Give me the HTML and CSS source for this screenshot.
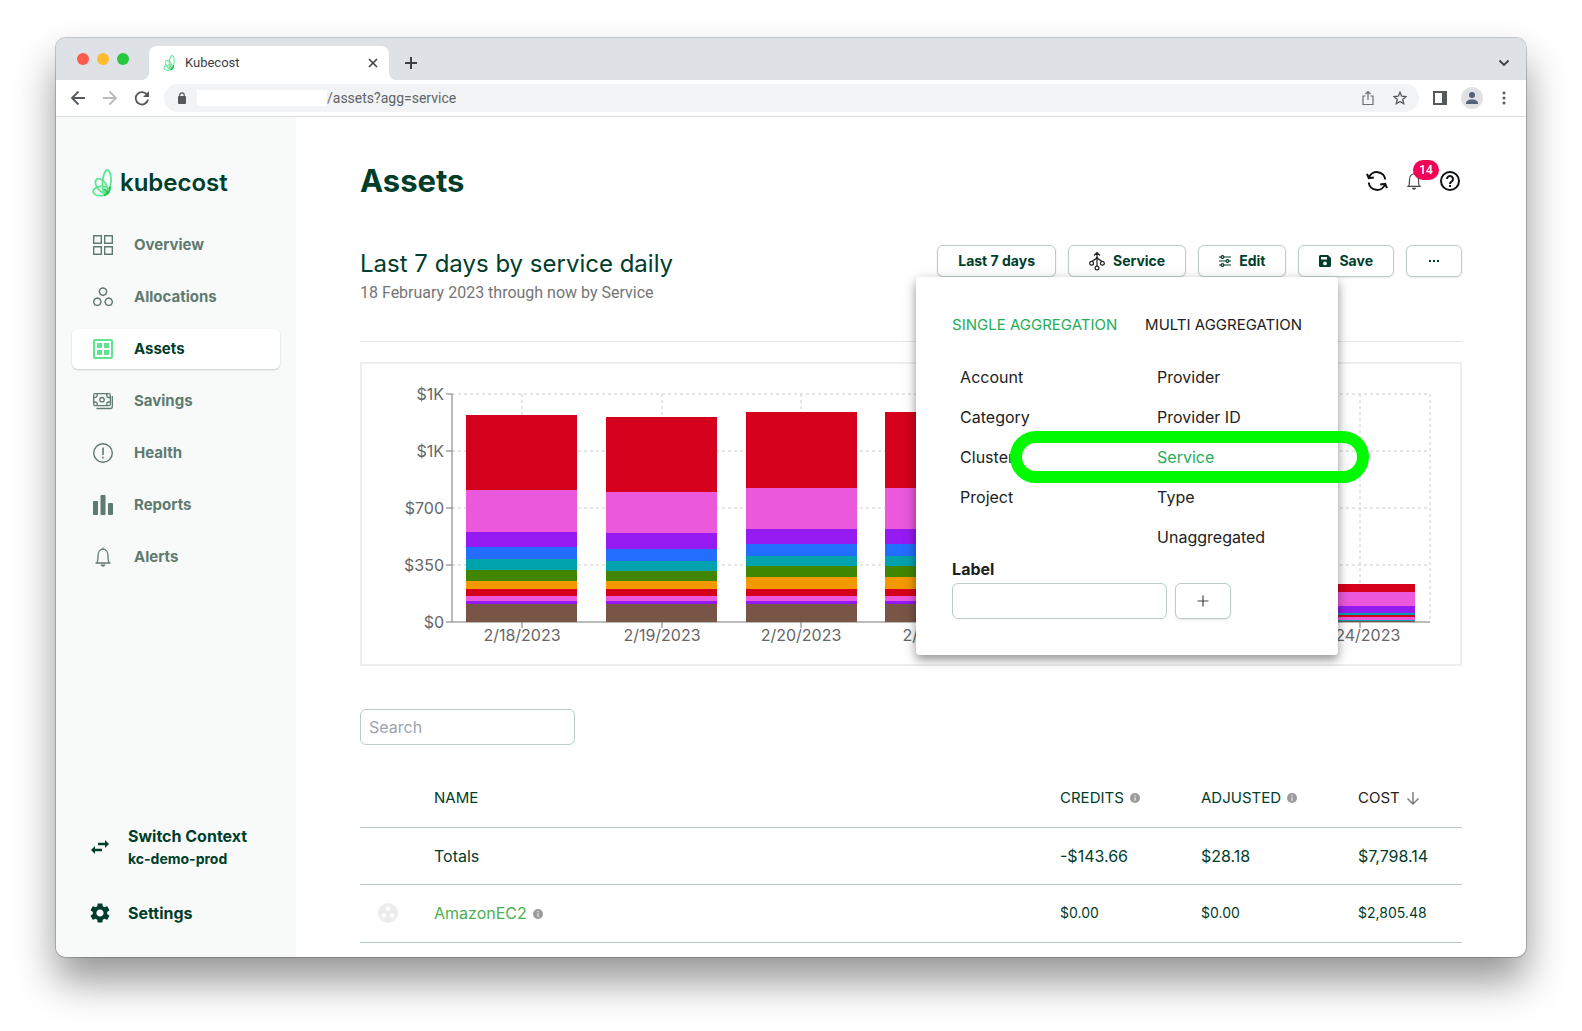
FILE: index.html
```html
<!DOCTYPE html>
<html lang="en">
<head>
<meta charset="utf-8">
<title>Kubecost</title>
<meta name="viewport" content="width=device-width, initial-scale=1">
<link rel="stylesheet" href="styles.css">
</head>
<body>
<svg class="defs" aria-hidden="true">
  <symbol id="mark" viewBox="0 0 20 28">
    <g fill="none" stroke-width="1.800">
      <ellipse cx="14.700" cy="13" rx="4.200" ry="12" stroke="#5fe590" transform="rotate(4 14.700 13)"/>
      <ellipse cx="9.500" cy="16.800" rx="4.600" ry="8.200" stroke="#5fe590" transform="rotate(-36 9.500 16.800)"/>
      <ellipse cx="9.200" cy="22" rx="8.200" ry="4.600" stroke="#5fe590" transform="rotate(-8 9.200 22)"/>
      <path d="M18 17.500c0 5-2 8-6 8.800" stroke="#1fc94f"/>
      <path d="M12 20c2 1.500 3.500 3 4 5" stroke="#1fc94f"/>
    </g>
  </symbol>
  <symbol id="bell" viewBox="0 0 20 20">
    <path d="M2.500 16h15M4 16c1-2 1-3.500 1-7 0-4 2-6.800 5-6.800S15 5 15 9c0 3.500 0 5 1 7M10 .5v2" fill="none" stroke="currentColor" stroke-width="1.300"/>
    <path d="M7.500 17.600h5c-.4 1.500-1.300 2.100-2.500 2.100s-2.100-.6-2.500-2.100z" fill="currentColor"/>
  </symbol>
  <symbol id="info" viewBox="0 0 10 10">
    <circle cx="5" cy="5" r="5" fill="#9b9b9b"/>
    <path d="M5 2v1.200M5 4.200V7.800" stroke="#fff" stroke-width="1"/>
  </symbol>
</svg>

<div class="window">
  <div class="tabstrip">
    <div class="lights"><span class="light red"></span><span class="light amber"></span><span class="light green"></span></div>
    <div class="tab">
      <svg class="favicon" aria-hidden="true"><use href="#mark"/></svg>
      <span class="tab-title">Kubecost</span>
      <button class="plain" aria-label="Close tab"><svg width="10" height="10" viewBox="0 0 10 10"><path d="M1 1l8 8M9 1L1 9" stroke="#3c4043" stroke-width="1.600"/></svg></button>
    </div>
    <button class="plain new-tab" aria-label="New tab"><svg width="12" height="12" viewBox="0 0 12 12"><path d="M6 0v12M0 6h12" stroke="#3c4043" stroke-width="2"/></svg></button>
    <button class="plain tab-search" aria-label="Search tabs"><svg width="12" height="8" viewBox="0 0 12 8"><path d="M1.500 1.500L6 6l4.500-4.500" fill="none" stroke="#3c4043" stroke-width="1.800"/></svg></button>
  </div>

  <div class="toolbar">
    <div class="history">
      <button class="plain" aria-label="Back"><svg width="16" height="16" viewBox="0 0 16 16"><path d="M15 8H2M8.500 1.500L2 8l6.500 6.500" fill="none" stroke="#55585c" stroke-width="1.800"/></svg></button>
      <button class="plain" aria-label="Forward"><svg width="16" height="16" viewBox="0 0 16 16"><path d="M1 8h13M7.500 1.500L14 8l-6.500 6.500" fill="none" stroke="#b9bbbe" stroke-width="1.800"/></svg></button>
      <button class="plain" aria-label="Reload"><svg width="16" height="16" viewBox="0 0 16 16"><path d="M13.200 5A6.200 6.200 0 1 0 14 9.500" fill="none" stroke="#55585c" stroke-width="1.800"/><path d="M15 1v6H9z" fill="#55585c"/></svg></button>
    </div>
    <div class="address">
      <svg width="10" height="12" viewBox="0 0 10 12" aria-hidden="true"><rect x="1" y="4" width="8" height="8" rx="1" fill="#55585c"/><path d="M2.800 5V3a2.200 2.200 0 0 1 4.400 0v2" fill="none" stroke="#55585c" stroke-width="1.200"/></svg>
      <span class="host"></span>
      <span class="path">/assets?agg=service</span>
      <button class="plain share" aria-label="Share"><svg width="12" height="16" viewBox="0 0 12 16"><path d="M3.500 6H1v8.500h10V6H8.500M6 10V1.500M3.500 4L6 1.500 8.500 4" fill="none" stroke="#6b6e72" stroke-width="1.200"/></svg></button>
      <button class="plain" aria-label="Bookmark"><svg width="14" height="14" viewBox="0 0 14 14"><path d="M7 1.200l1.700 4 4.300.4-3.300 2.800 1 4.300L7 10.400l-3.700 2.300 1-4.300L1 5.600l4.300-.4z" fill="none" stroke="#55585c" stroke-width="1.300"/></svg></button>
    </div>
    <button class="plain" aria-label="Side panel"><svg width="14" height="14" viewBox="0 0 14 14"><rect x="1" y="1" width="12" height="12" fill="none" stroke="#55585c" stroke-width="2"/><path d="M9 1h4v12H9z" fill="#55585c"/></svg></button>
    <button class="plain" aria-label="Profile"><svg width="22" height="22" viewBox="0 0 22 22"><circle cx="11" cy="11" r="11" fill="#dfe1e5"/><circle cx="11" cy="8" r="3" fill="#55607a"/><path d="M5 16.500c0-3 3-4 6-4s6 1 6 4v.5H5z" fill="#55607a"/></svg></button>
    <button class="plain" aria-label="Menu"><svg width="14" height="16" viewBox="0 0 14 16"><g fill="#55585c"><circle cx="7" cy="3" r="1.500"/><circle cx="7" cy="8" r="1.500"/><circle cx="7" cy="13" r="1.500"/></g></svg></button>
  </div>

  <div class="app">
    <aside class="sidebar">
      <a class="brand" href="#"><svg class="mark" aria-hidden="true"><use href="#mark"/></svg>kubecost</a>
      <nav class="nav">
        <a href="#"><svg class="icon" viewBox="0 0 20 20"><path d="M.7.7h7.600v7.600H.7zM11.700.7h7.600v7.600h-7.600zM.7 11.700h7.600v7.600H.7zM11.700 11.700h7.600v7.600h-7.600z" fill="none" stroke="currentColor" stroke-width="1.400"/></svg>Overview</a>
        <a href="#"><svg class="icon" viewBox="0 0 20 20"><g fill="none" stroke="currentColor" stroke-width="1.400"><path d="M10 .8l2.600 1 1.200 2.800-1.200 2.800-2.600 1-2.600-1-1.200-2.800 1.200-2.800z"/><path d="M4.300 11l2.600 1 1.200 2.800-1.200 2.800-2.600 1-2.600-1-1.200-2.800L1.700 12z"/><path d="M15.700 11l2.600 1 1.200 2.800-1.200 2.800-2.600 1-2.600-1-1.200-2.800 1.200-2.800z"/></g></svg>Allocations</a>
        <a href="#" class="active" aria-current="page"><svg class="icon" viewBox="0 0 20 20"><rect x="1" y="1" width="18" height="18" rx="1" fill="none" stroke="currentColor" stroke-width="2"/><path d="M4 4h5v5H4zM11 4h5v5h-5zM4 11h5v5H4zM11 11h5v5h-5z" fill="currentColor"/></svg>Assets</a>
        <a href="#"><svg class="icon" viewBox="0 0 20 20"><g fill="none" stroke="currentColor" stroke-width="1.300"><rect x=".7" y="2.700" width="16.600" height="12" rx="1.500"/><path d="M19.300 5v10.500a2 2 0 0 1-2 2H3.500"/><circle cx="9" cy="8.700" r="2.200"/><path d="M.7 6.500h1.500a2 2 0 0 0 2-2V2.700M17.300 6.500h-1.500a2 2 0 0 1-2-2V2.700M.7 11h1.500a2 2 0 0 1 2 2v1.700M17.300 11h-1.500a2 2 0 0 0-2 2v1.700"/></g></svg>Savings</a>
        <a href="#"><svg class="icon" viewBox="0 0 20 20"><circle cx="10" cy="10" r="9.300" fill="none" stroke="currentColor" stroke-width="1.400"/><path d="M10 4.500v7.500M10 13.800v1.700" stroke="currentColor" stroke-width="1.600"/></svg>Health</a>
        <a href="#"><svg class="icon" viewBox="0 0 20 20"><g fill="currentColor"><rect y="6" width="5" height="14" rx="1"/><rect x="7.500" width="5" height="20" rx="1"/><rect x="15" y="8" width="5" height="12" rx="1"/></g></svg>Reports</a>
        <a href="#"><svg class="icon"><use href="#bell"/></svg>Alerts</a>
      </nav>
      <div class="sidebar-foot">
        <a href="#"><svg width="22" height="22" viewBox="0 0 22 22"><path d="M9 6.800h7V4l4 4-4 4V9.200H9zM13 12.800H6V10l-4 4 4 4v-2.800h7z" fill="currentColor"/></svg><span>Switch Context<small>kc-demo-prod</small></span></a>
        <a href="#"><svg width="22" height="22" viewBox="1 1 22 22"><path fill="currentColor" d="M19.140 12.940c.04-.3.060-.61.060-.94 0-.32-.02-.64-.07-.94l2.030-1.580c.18-.14.230-.41.120-.61l-1.920-3.320c-.12-.22-.37-.29-.59-.22l-2.390.960c-.5-.38-1.030-.7-1.620-.94l-.36-2.540c-.04-.24-.24-.41-.48-.41h-3.840c-.24 0-.43.170-.47.410l-.36 2.540c-.59.240-1.130.570-1.620.940l-2.390-.96c-.22-.08-.47 0-.59.220L2.740 8.870c-.12.210-.08.470.120.610l2.030 1.580c-.05.300-.09.630-.09.940s.02.640.070.940l-2.030 1.580c-.18.140-.23.410-.12.610l1.920 3.320c.12.220.370.290.590.220l2.390-.96c.5.380 1.030.700 1.620.940l.36 2.540c.05.240.240.410.480.410h3.840c.24 0 .44-.17.470-.41l.36-2.540c.59-.24 1.130-.56 1.620-.94l2.390.960c.22.080.470 0 .59-.22l1.920-3.320c.12-.22.070-.47-.12-.61l-2.010-1.580zM12 15.600c-1.980 0-3.600-1.620-3.600-3.600s1.620-3.600 3.600-3.600 3.600 1.620 3.600 3.600-1.620 3.600-3.600 3.600z"/></svg><span>Settings</span></a>
      </div>
    </aside>

    <main class="main">
      <header class="page-head">
        <h1>Assets</h1>
        <div class="head-icons">
          <button class="plain" aria-label="Refresh"><svg width="22" height="22" viewBox="0 0 22 22"><g fill="none" stroke="#111" stroke-width="2"><path d="M3 7.800A8.400 8.400 0 0 1 19.300 9.500M19 14.200A8.400 8.400 0 0 1 2.700 12.500"/><path d="M1 3.800l1.800 4.400 5-.8M21 18.200l-1.800-4.400-5 .8"/></g></svg></button>
          <button class="plain bell" aria-label="Notifications"><svg width="18" height="18"><use href="#bell"/></svg><span class="badge">14</span></button>
          <button class="plain" aria-label="Help"><svg width="20" height="20" viewBox="0 0 20 20"><circle cx="10" cy="10" r="9" fill="none" stroke="#111" stroke-width="2"/><path d="M7 8a3 3 0 1 1 4.500 2.600C10.500 11.200 10 11.700 10 13" fill="none" stroke="#111" stroke-width="2"/><path d="M9 14h2v2H9z" fill="#111"/></svg></button>
        </div>
      </header>

      <section class="report-head">
        <div class="report-title">
          <h2>Last 7 days by service daily</h2>
          <p>18 February 2023 through now by Service</p>
        </div>
        <div class="actions">
          <button class="btn">Last 7 days</button>
          <div class="menu-anchor">
            <button class="btn" aria-expanded="true"><svg width="16" height="20" viewBox="0 0 16 20"><g fill="none" stroke="#222" stroke-width="1.200"><path d="M8 15V1.500M5 4.500l3-3 3 3M3.300 10.500C4 8.500 8 9 8 5.500M12.700 10.500C12 8.500 8 9 8 5.500"/><circle cx="2.600" cy="12.300" r="1.900"/><circle cx="13.400" cy="12.300" r="1.900"/><circle cx="8" cy="17" r="1.900"/></g></svg>Service</button>
            <div class="popover">
              <div class="agg-tabs">
                <button class="plain selected">SINGLE AGGREGATION</button>
                <button class="plain">MULTI AGGREGATION</button>
              </div>
              <div class="agg-options">
                <div class="agg-column">
                  <button class="plain">Account</button>
                  <button class="plain">Category</button>
                  <button class="plain">Cluster</button>
                  <button class="plain">Project</button>
                </div>
                <div class="agg-column">
                  <button class="plain">Provider</button>
                  <button class="plain">Provider ID</button>
                  <button class="plain selected">Service</button>
                  <button class="plain">Type</button>
                  <button class="plain">Unaggregated</button>
                </div>
              </div>
              <label class="label-title" for="label-input">Label</label>
              <div class="label-row">
                <input class="field" id="label-input" type="text">
                <button class="btn add" aria-label="Add label"><svg width="12" height="12" viewBox="0 0 12 12"><path d="M6 .5v11M.5 6h11" stroke="#444" stroke-width="1.200"/></svg></button>
              </div>
              <span class="ring"></span>
            </div>
          </div>
          <button class="btn"><svg class="small" viewBox="0 0 12 12"><g fill="none" stroke="currentColor" stroke-width="1.200"><path d="M0 2h2M5 2h7M0 6h7M10 6h2M0 10h2M5 10h7"/><circle cx="3.500" cy="2" r="1.300"/><circle cx="8.500" cy="6" r="1.300"/><circle cx="3.500" cy="10" r="1.300"/></g></svg>Edit</button>
          <button class="btn"><svg class="small" viewBox="0 0 12 12"><path fill="currentColor" fill-rule="evenodd" d="M1.500 0H9l3 3v7.500A1.500 1.500 0 0 1 10.500 12h-9A1.500 1.500 0 0 1 0 10.500v-9A1.500 1.500 0 0 1 1.500 0zM2 2v2.500h6V2zM6 6.500a1.900 1.900 0 1 0 0 3.800 1.900 1.900 0 0 0 0-3.800z"/></svg>Save</button>
          <button class="btn more" aria-label="More"><svg width="12" height="4" viewBox="0 0 12 4"><path d="M1 1h2v2H1zM5 1h2v2H5zM9 1h2v2H9z" fill="currentColor"/></svg></button>
        </div>
      </section>

      <figure class="chart">
        <svg viewBox="0 0 1098 300" role="img" aria-label="Daily cost by service">
          <g class="grid">
            <path d="M90 30H1068M90 87H1068M90 144H1068M90 201H1068"/>
            <path d="M160 30V258M300 30V258M439 30V258M579 30V258M719 30V258M858 30V258M998 30V258M1068 30V258"/>
          </g>
          <path class="axis" d="M90 30V258H1068"/>
          <path class="ticks" d="M84 30h6M84 87h6M84 144h6M84 201h6M84 258h6M160 258v6M300 258v6M439 258v6M579 258v6M719 258v6M858 258v6M998 258v6"/>
          <g>
            <path class="c-red" d="M104 51h111v75H104zM104 225h111v7H104z"/>
            <path class="c-pink" d="M104 126h111v42H104zM104 232h111v5H104z"/>
            <path class="c-purple" d="M104 168h111v15H104zM104 237h111v3H104z"/>
            <path class="c-blue" d="M104 183h111v12H104z"/>
            <path class="c-teal" d="M104 195h111v11H104z"/>
            <path class="c-green" d="M104 206h111v11H104z"/>
            <path class="c-orange" d="M104 217h111v8H104z"/>
            <path class="c-brown" d="M104 240h111v18H104z"/>
          </g>
          <g>
            <path class="c-red" d="M244 53h111v75H244zM244 225h111v7H244z"/>
            <path class="c-pink" d="M244 128h111v41H244zM244 232h111v5H244z"/>
            <path class="c-purple" d="M244 169h111v16H244zM244 237h111v3H244z"/>
            <path class="c-blue" d="M244 185h111v12H244z"/>
            <path class="c-teal" d="M244 197h111v10H244z"/>
            <path class="c-green" d="M244 207h111v10H244z"/>
            <path class="c-orange" d="M244 217h111v8H244z"/>
            <path class="c-brown" d="M244 240h111v18H244z"/>
          </g>
          <g id="day-3">
            <path class="c-red" d="M384 48h111v76H384zM384 225h111v7H384z"/>
            <path class="c-pink" d="M384 124h111v41H384zM384 232h111v5H384z"/>
            <path class="c-purple" d="M384 165h111v15H384zM384 237h111v3H384z"/>
            <path class="c-blue" d="M384 180h111v12H384z"/>
            <path class="c-teal" d="M384 192h111v10H384z"/>
            <path class="c-green" d="M384 202h111v11H384z"/>
            <path class="c-orange" d="M384 213h111v12H384z"/>
            <path class="c-brown" d="M384 240h111v18H384z"/>
          </g>
          <use href="#day-3" x="139"/>
          <use href="#day-3" x="279"/>
          <use href="#day-3" x="419"/>
          <g>
            <path class="c-red" d="M942 220h111v8H942zM942 251h111v2H942z"/>
            <path class="c-pink" d="M942 228h111v14H942zM942 253h111v3H942z"/>
            <path class="c-purple" d="M942 242h111v7H942z"/>
            <path class="c-teal" d="M942 249h111v2H942zM942 256h111v1H942z"/>
            <path class="c-brown" d="M942 257h111v1H942z"/>
          </g>
          <g class="y-labels">
            <text x="82" y="36">$1K</text><text x="82" y="93">$1K</text><text x="82" y="150">$700</text><text x="82" y="207">$350</text><text x="82" y="264">$0</text>
          </g>
          <g class="x-labels">
            <text x="160" y="277">2/18/2023</text><text x="300" y="277">2/19/2023</text><text x="439" y="277">2/20/2023</text><text x="579" y="277">2/21/2023</text><text x="719" y="277">2/22/2023</text><text x="858" y="277">2/23/2023</text><text x="998" y="277">2/24/2023</text>
          </g>
        </svg>
      </figure>

      <input class="field search" type="search" placeholder="Search" aria-label="Search">

      <table class="assets">
        <colgroup><col class="col-icon"><col><col class="col-credits"><col class="col-adjusted"><col class="col-cost"></colgroup>
        <thead>
          <tr><th></th><th>NAME</th><th>CREDITS<svg class="info"><use href="#info"/></svg></th><th>ADJUSTED<svg class="info"><use href="#info"/></svg></th><th class="sorted">COST<svg class="sort" viewBox="0 0 14 14"><path d="M7 1v12M1.500 7.500L7 13l5.500-5.500" fill="none" stroke="#777" stroke-width="1.400"/></svg></th></tr>
        </thead>
        <tbody>
          <tr><td></td><td>Totals</td><td>-$143.66</td><td>$28.18</td><td>$7,798.14</td></tr>
          <tr class="item"><td><svg class="group" viewBox="0 0 20 20"><circle cx="10" cy="10" r="10" fill="#ececec"/><g fill="#fff"><circle cx="10" cy="5.800" r="2.300"/><circle cx="5.800" cy="12.500" r="2.300"/><circle cx="14.200" cy="12.500" r="2.300"/></g></svg></td><td class="name"><a href="#">AmazonEC2</a><svg class="info"><use href="#info"/></svg></td><td>$0.00</td><td>$0.00</td><td>$2,805.48</td></tr>
        </tbody>
      </table>
    </main>
  </div>
</div>
</body>
</html>
```
FILE: styles.css
```css
* { box-sizing: border-box; }

body {
  margin: 0;
  min-height: 100vh;
  padding: 38px 56px 74px;
  display: flex;
  background: #fff;
  font: 16px/24px Inter, "Liberation Sans", sans-serif;
  color: #003d2b;
}

a { color: inherit; text-decoration: none; }
svg { flex: none; }
button, input { font: inherit; color: inherit; }
h1, h2, p, figure { margin: 0; }

.defs { position: absolute; width: 0; height: 0; }

.plain {
  display: flex;
  align-items: center;
  justify-content: center;
  padding: 0;
  border: 0;
  background: none;
}

/* Browser window */
.window {
  flex: 1;
  min-width: 0;
  display: flex;
  flex-direction: column;
  border-radius: 10px;
  overflow: hidden;
  background: #fff;
  box-shadow: 0 0 0 1px rgba(0, 0, 0, .2), 0 24px 40px rgba(0, 0, 0, .42);
}

.tabstrip {
  display: flex;
  align-items: flex-end;
  height: 42px;
  padding-right: 16px;
  background: #dee1e6;
}

.lights { display: flex; gap: 8px; align-self: center; width: 93px; padding-left: 21px; }
.light { width: 12px; height: 12px; border-radius: 50%; }
.red { background: #ff5a52; }
.amber { background: #febb2d; }
.green { background: #27c83f; }

.tab {
  position: relative;
  display: flex;
  align-items: center;
  width: 240px;
  height: 34px;
  padding: 0 11px 0 13px;
  border-radius: 8px 8px 0 0;
  background: #fff;
}
.tab::before,
.tab::after {
  content: "";
  position: absolute;
  bottom: 0;
  width: 8px;
  height: 8px;
}
.tab::before { right: 100%; background: radial-gradient(circle at 0 0, transparent 8px, #fff 8px); }
.tab::after { left: 100%; background: radial-gradient(circle at 100% 0, transparent 8px, #fff 8px); }
.favicon { width: 14px; height: 16px; }
.tab-title { flex: 1; margin-left: 9px; font: 13px/16px Roboto, sans-serif; color: #3c4043; }
.new-tab { width: 44px; height: 34px; }
.tab-search { height: 34px; margin-left: auto; }

.toolbar {
  display: flex;
  align-items: center;
  gap: 14px;
  height: 37px;
  padding: 0 15px 0 14px;
  border-bottom: 1px solid #dadce0;
}
.history { display: flex; gap: 16px; }
.address {
  flex: 1;
  display: flex;
  align-items: center;
  height: 28px;
  padding: 0 12px 0 13px;
  border-radius: 14px;
  background: #f1f3f4;
}
.host { width: 130px; height: 16px; margin-left: 10px; background: #fff; }
.path { flex: 1; font: 14px/20px Roboto, sans-serif; color: #5f6368; }
.share { margin-right: 19px; }

/* Sidebar */
.app { flex: 1; display: flex; }

.sidebar {
  flex: none;
  display: flex;
  flex-direction: column;
  width: 240px;
  padding: 52px 16px 32px;
  background: #f8faf9;
}
.brand {
  display: flex;
  align-items: center;
  gap: 8px;
  height: 28px;
  padding-left: 20px;
  font-size: 24px;
  font-weight: 600;
}
.mark { width: 20px; height: 28px; }

.nav { display: flex; flex-direction: column; gap: 12px; margin-top: 28px; }
.nav a {
  display: flex;
  align-items: center;
  gap: 21px;
  height: 40px;
  padding-left: 21px;
  border-radius: 6px;
  font-size: 15px;
  font-weight: 700;
  color: #5f7a70;
}
.nav .active { background: #fff; color: #003d2b; box-shadow: 0 1px 2px rgba(0, 0, 0, .2); }
.nav .active .icon { color: #5fe590; }
.icon { width: 20px; height: 20px; }

.sidebar-foot { display: flex; flex-direction: column; gap: 31px; margin-top: auto; }
.sidebar-foot a {
  display: flex;
  align-items: center;
  gap: 17px;
  padding-left: 17px;
  font-weight: 700;
}
.sidebar-foot small { display: block; font-size: 14px; line-height: 22px; }

/* Report page */
.main { flex: 1; min-width: 0; padding: 44px 64px 14px; }

.page-head { display: flex; justify-content: space-between; align-items: center; }
h1 { font-size: 31px; line-height: 40px; font-weight: 700; }
.head-icons { display: flex; align-items: center; gap: 17px; padding-right: 2px; }
.bell { position: relative; color: #444; }
.badge {
  position: absolute;
  left: 8px;
  top: -12px;
  width: 26px;
  height: 20px;
  border-radius: 10px;
  background: #f50057;
  color: #fff;
  font: 500 12px/20px Roboto, sans-serif;
  text-align: center;
}

.report-head {
  display: flex;
  justify-content: space-between;
  align-items: flex-start;
  margin-top: 44px;
  padding-bottom: 36px;
  border-bottom: 1px solid #e5e7e6;
}
.report-title { padding-top: 3px; }
h2 { font-size: 24px; line-height: 32px; font-weight: 400; }
.report-title p { margin-top: 1px; font-family: Roboto, sans-serif; color: #757575; }

.actions { display: flex; gap: 12px; }
.btn {
  display: flex;
  align-items: center;
  justify-content: center;
  gap: 8px;
  height: 32px;
  padding: 0 20px;
  border: 1px solid #bccdc7;
  border-radius: 6px;
  background: #fff;
  box-shadow: 0 1px 2px rgba(0, 0, 0, .1);
  font-size: 14px;
  font-weight: 700;
}
.btn .small { width: 12px; height: 12px; }
.btn.more { width: 56px; }

.menu-anchor { position: relative; }
.popover {
  position: absolute;
  z-index: 2;
  top: 100%;
  left: 50%;
  width: 422px;
  padding: 36px;
  transform: translateX(-50%);
  border-radius: 4px;
  background: #fff;
  box-shadow: 0 5px 8px rgba(0, 0, 0, .3), 0 3px 16px rgba(0, 0, 0, .16);
  color: #212121;
}
.agg-tabs { display: flex; justify-content: space-between; }
.agg-tabs .plain { font-size: 15px; white-space: nowrap; }
.popover .selected { color: #25ad58; }
.agg-options { display: grid; grid-template-columns: 197px 1fr; margin: 20px 0 0 8px; }
.agg-column { display: flex; flex-direction: column; align-items: flex-start; }
.agg-column .plain { height: 40px; }
.label-title { display: block; font-weight: 700; }
.label-row { display: flex; gap: 8px; margin-top: 2px; }
.btn.add { width: 56px; height: 36px; }

.field {
  width: 215px;
  height: 36px;
  padding: 0 8px;
  border: 1px solid #bccdc7;
  border-radius: 6px;
  background: #fff;
  outline: 0;
}
.field::placeholder { color: #9ca3af; }

.ring {
  position: absolute;
  left: 94px;
  top: 154px;
  width: 359px;
  height: 52px;
  border: 12px solid #00fb00;
  border-radius: 26px;
  pointer-events: none;
}

/* Chart */
.chart { margin-top: 20px; border: 2px solid #eee; }
.chart svg { display: block; width: 100%; }
.grid { fill: none; stroke: #ccc; stroke-dasharray: 3 3; }
.axis, .ticks { fill: none; stroke: #777; }
.chart text { font-size: 16px; fill: #666; }
.y-labels { text-anchor: end; }
.x-labels { text-anchor: middle; }
.c-red { fill: #d5001c; }
.c-pink { fill: #eb58dc; }
.c-purple { fill: #961af2; }
.c-blue { fill: #236dff; }
.c-teal { fill: #00a2ae; }
.c-green { fill: #418600; }
.c-orange { fill: #f29900; }
.c-brown { fill: #795548; }

/* Table */
.search { display: block; margin-top: 43px; }

.assets {
  width: 100%;
  margin-top: 25px;
  border-collapse: collapse;
  table-layout: fixed;
}
.col-icon { width: 74px; }
.col-credits { width: 141px; }
.col-adjusted { width: 157px; }
.col-cost { width: 104px; }
.assets th, .assets td {
  height: 57px;
  padding: 0;
  border-bottom: 1px solid #b5cac3;
  text-align: left;
  font-weight: 400;
  white-space: nowrap;
}
.assets th { font-size: 15px; }
.assets .sorted { color: #222; }
.item td { height: 58px; font-size: 14px; }
.item .name { font-size: 16px; color: #4caf50; }
.info { width: 10px; height: 10px; margin-left: 6px; }
.sort { width: 14px; height: 14px; margin-left: 6px; vertical-align: -2px; }
.group { display: block; width: 20px; height: 20px; margin-left: 18px; }
```
